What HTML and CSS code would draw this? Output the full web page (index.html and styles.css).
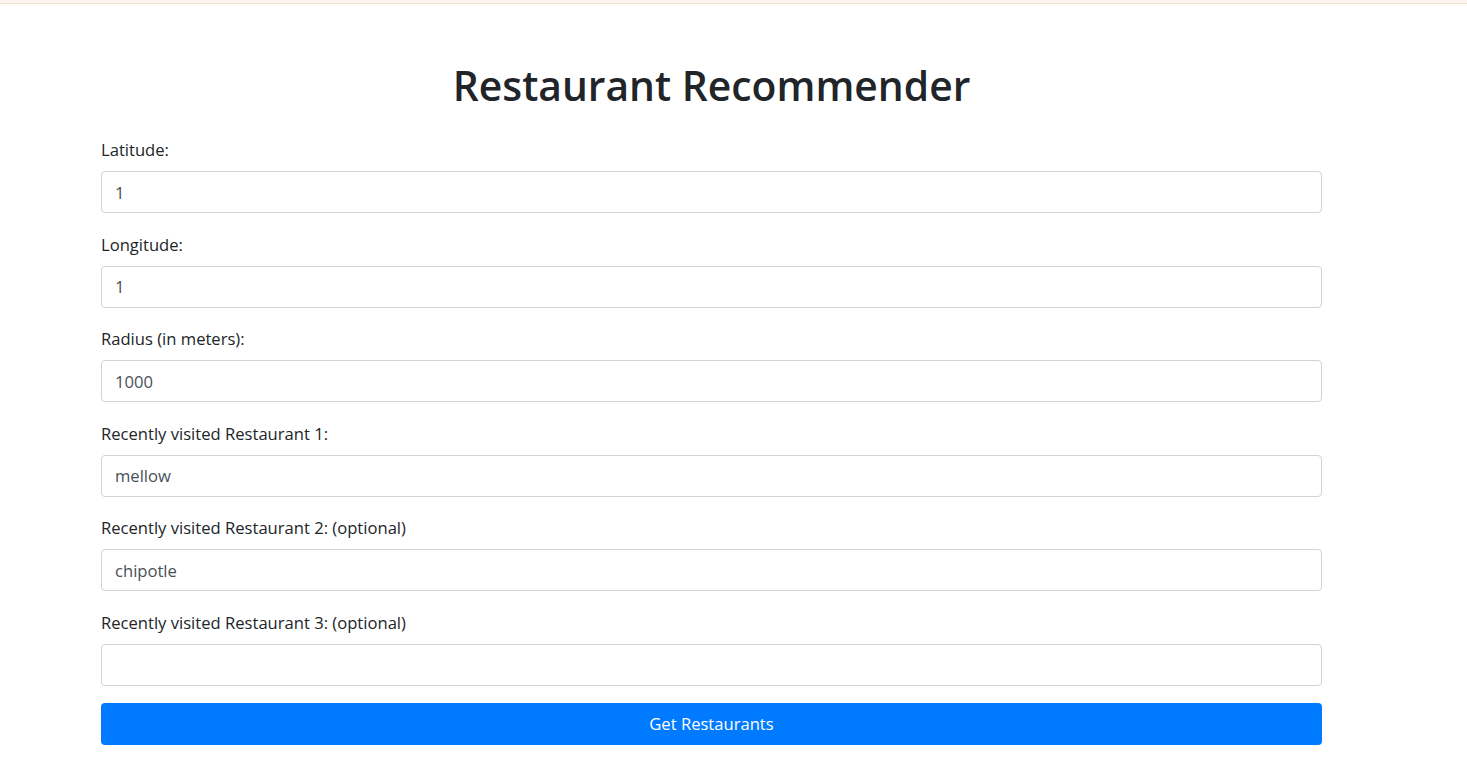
FILE: index.html
```html
<!DOCTYPE html>
<html lang="en">
<head>
<meta charset="utf-8">
<title>Restaurant Recommender</title>
<link rel="stylesheet" href="styles.css">
</head>
<body>
<div class="topbar"></div>
<main class="container">
  <h1 class="title">Restaurant Recommender</h1>
  <form class="form">
    <div class="group">
      <label class="label" for="lat">Latitude:</label>
      <input class="control" id="lat" type="text" value="1">
    </div>
    <div class="group">
      <label class="label" for="lng">Longitude:</label>
      <input class="control" id="lng" type="text" value="1">
    </div>
    <div class="group">
      <label class="label" for="rad">Radius (in meters):</label>
      <input class="control" id="rad" type="text" value="1000">
    </div>
    <div class="group">
      <label class="label" for="r1">Recently visited Restaurant 1:</label>
      <input class="control" id="r1" type="text" value="mellow">
    </div>
    <div class="group">
      <label class="label" for="r2">Recently visited Restaurant 2: (optional)</label>
      <input class="control" id="r2" type="text" value="chipotle">
    </div>
    <div class="group group-last">
      <label class="label" for="r3">Recently visited Restaurant 3: (optional)</label>
      <input class="control" id="r3" type="text" value="">
    </div>
    <button class="btn" type="button">Get Restaurants</button>
  </form>
</main>
</body>
</html>
```
FILE: styles.css
```css
* { box-sizing: border-box; }
html, body { margin: 0; padding: 0; background: #fff; }
body {
  font-family: "Open Sans", "Noto Sans", sans-serif;
  font-size: 16.6px;
  line-height: 1.5;
  color: #212529;
}
.topbar {
  height: 4px;
  background: #fdf6f0;
  border-bottom: 1px solid #f3e2d2;
}
.container {
  width: 1221px;
  margin-left: 101px;
}
.title {
  margin: 57px 0 29px;
  font-size: 40.8px;
  font-weight: 600;
  line-height: 48px;
  text-align: center;
}
.form { display: flex; flex-direction: column; }
.group { display: flex; flex-direction: column; margin-bottom: 19.6px; }
.group-last { margin-bottom: 17px; }
.label { line-height: 24px; margin-bottom: 9px; }
.control {
  height: 42px;
  padding: 8px 13px;
  border: 1px solid #ced4da;
  border-radius: 4px;
  font-family: inherit;
  font-size: 16.6px;
  color: #495057;
  background: #fff;
}
.btn {
  height: 42px;
  border: 0;
  border-radius: 4px;
  background: #007bff;
  color: #fff;
  font-family: inherit;
  font-size: 16.6px;
}
```
